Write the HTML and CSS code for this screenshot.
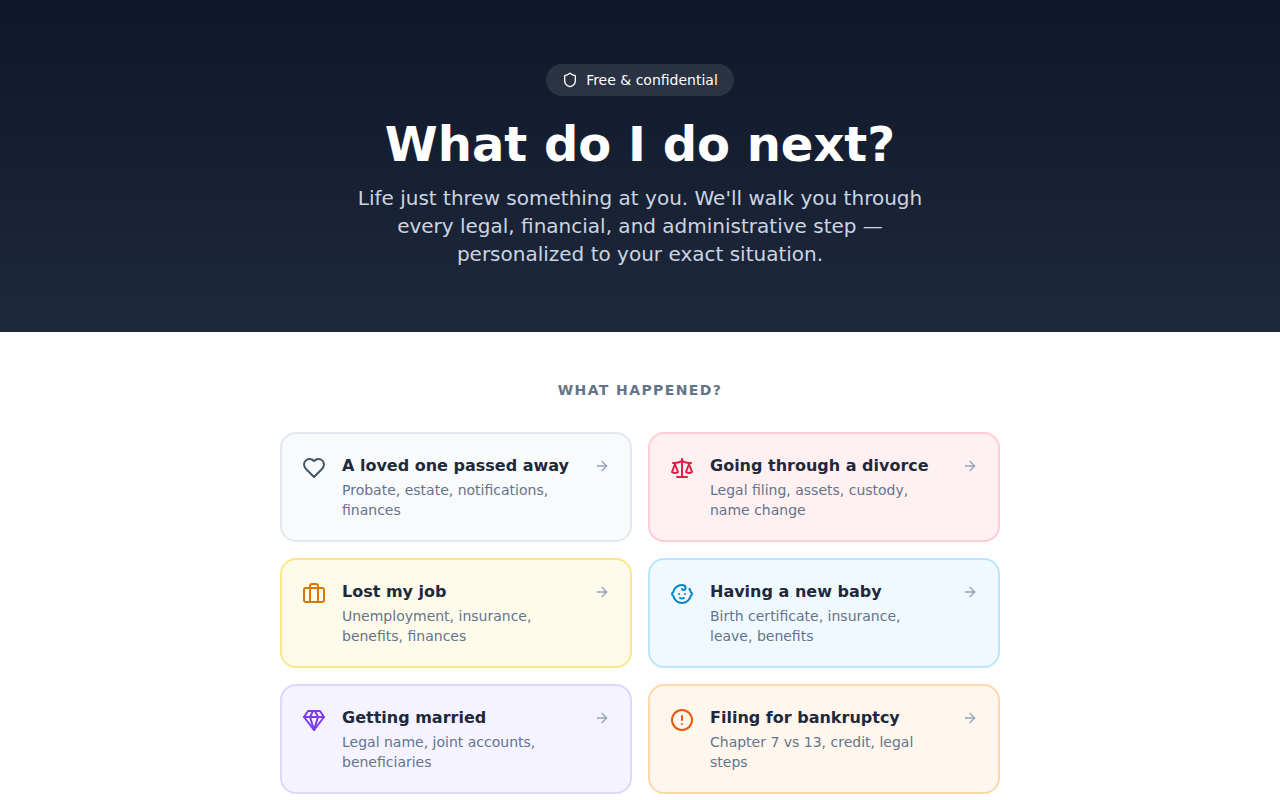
FILE: index.html
```html
<!DOCTYPE html>
<html lang="en">
<head>
  <meta charset="utf-8">
  <meta name="viewport" content="width=device-width, initial-scale=1">
  <title>What do I do next?</title>
  <link rel="stylesheet" href="styles.css">
</head>
<body>
  <header class="hero">
    <div class="badge">
      <svg class="icon icon-sm" viewBox="0 0 24 24"><path d="M20 13c0 5-3.5 7.5-7.66 8.95a1 1 0 0 1-.67-.01C7.5 20.5 4 18 4 13V6a1 1 0 0 1 1-1c2 0 4.500-1.200 6.240-2.720a1.170 1.170 0 0 1 1.520 0C14.510 3.810 17 5 19 5a1 1 0 0 1 1 1z"/></svg>
      Free &amp; confidential
    </div>
    <h1>What do I do next?</h1>
    <p>Life just threw something at you. We'll walk you through every legal, financial, and administrative step — personalized to your exact situation.</p>
  </header>

  <main class="events">
    <h2>What happened?</h2>
    <div class="grid">
      <button type="button" class="card slate">
        <svg class="icon" viewBox="0 0 24 24"><path d="M19 14c1.490-1.460 3-3.210 3-5.500A5.500 5.500 0 0 0 16.500 3c-1.760 0-3 .5-4.500 2-1.500-1.500-2.740-2-4.500-2A5.500 5.500 0 0 0 2 8.500c0 2.300 1.500 4.050 3 5.500l7 7Z"/></svg>
        <span class="card-text">
          <span class="card-title">A loved one passed away</span>
          <span class="card-desc">Probate, estate, notifications, finances</span>
        </span>
        <svg class="icon icon-sm arrow" viewBox="0 0 24 24"><path d="M5 12h14"/><path d="m12 5 7 7-7 7"/></svg>
      </button>

      <button type="button" class="card rose">
        <svg class="icon" viewBox="0 0 24 24"><path d="m16 16 3-8 3 8c-.87.65-1.920 1-3 1s-2.130-.35-3-1Z"/><path d="m2 16 3-8 3 8c-.87.65-1.920 1-3 1s-2.130-.35-3-1Z"/><path d="M7 21h10"/><path d="M12 3v18"/><path d="M3 7h2c2 0 5-1 7-2 2 1 5 2 7 2h2"/></svg>
        <span class="card-text">
          <span class="card-title">Going through a divorce</span>
          <span class="card-desc">Legal filing, assets, custody, name change</span>
        </span>
        <svg class="icon icon-sm arrow" viewBox="0 0 24 24"><path d="M5 12h14"/><path d="m12 5 7 7-7 7"/></svg>
      </button>

      <button type="button" class="card amber">
        <svg class="icon" viewBox="0 0 24 24"><path d="M16 20V4a2 2 0 0 0-2-2h-4a2 2 0 0 0-2 2v16"/><rect width="20" height="14" x="2" y="6" rx="2"/></svg>
        <span class="card-text">
          <span class="card-title">Lost my job</span>
          <span class="card-desc">Unemployment, insurance, benefits, finances</span>
        </span>
        <svg class="icon icon-sm arrow" viewBox="0 0 24 24"><path d="M5 12h14"/><path d="m12 5 7 7-7 7"/></svg>
      </button>

      <button type="button" class="card sky">
        <svg class="icon" viewBox="0 0 24 24"><path d="M10 16c.5.3 1.200.5 2 .5s1.500-.2 2-.5"/><path d="M15 12h.01"/><path d="M19.380 6.813A9 9 0 0 1 20.800 10.200a2 2 0 0 1 0 3.600 9 9 0 0 1-17.600 0 2 2 0 0 1 0-3.600A9 9 0 0 1 12 3c2 0 3.500 1.100 3.500 2.500s-.9 2.500-2 2.500c-.8 0-1.500-.4-1.500-1"/><path d="M9 12h.01"/></svg>
        <span class="card-text">
          <span class="card-title">Having a new baby</span>
          <span class="card-desc">Birth certificate, insurance, leave, benefits</span>
        </span>
        <svg class="icon icon-sm arrow" viewBox="0 0 24 24"><path d="M5 12h14"/><path d="m12 5 7 7-7 7"/></svg>
      </button>

      <button type="button" class="card violet">
        <svg class="icon" viewBox="0 0 24 24"><path d="M6 3h12l4 6-10 13L2 9Z"/><path d="M11 3 8 9l4 13 4-13-3-6"/><path d="M2 9h20"/></svg>
        <span class="card-text">
          <span class="card-title">Getting married</span>
          <span class="card-desc">Legal name, joint accounts, beneficiaries</span>
        </span>
        <svg class="icon icon-sm arrow" viewBox="0 0 24 24"><path d="M5 12h14"/><path d="m12 5 7 7-7 7"/></svg>
      </button>

      <button type="button" class="card orange">
        <svg class="icon" viewBox="0 0 24 24"><circle cx="12" cy="12" r="10"/><path d="M12 8v4"/><path d="M12 16h.01"/></svg>
        <span class="card-text">
          <span class="card-title">Filing for bankruptcy</span>
          <span class="card-desc">Chapter 7 vs 13, credit, legal steps</span>
        </span>
        <svg class="icon icon-sm arrow" viewBox="0 0 24 24"><path d="M5 12h14"/><path d="m12 5 7 7-7 7"/></svg>
      </button>
    </div>
  </main>
</body>
</html>
```

FILE: styles.css
```css
* {
  box-sizing: border-box;
}

body {
  margin: 0;
  font-family: "DejaVu Sans", sans-serif;
  color: #1e293b;
  background: #fff;
}

h1,
h2,
p {
  margin: 0;
}

.icon {
  flex: none;
  width: 24px;
  height: 24px;
  fill: none;
  stroke: currentColor;
  stroke-width: 2;
  stroke-linecap: round;
  stroke-linejoin: round;
}

.icon-sm {
  width: 16px;
  height: 16px;
}

/* Hero */
.hero {
  display: flex;
  flex-direction: column;
  align-items: center;
  padding: 64px 24px;
  text-align: center;
  color: #fff;
  background: linear-gradient(to bottom, #0f172a, #1e293b);
}

.badge {
  display: flex;
  align-items: center;
  gap: 8px;
  margin-bottom: 24px;
  padding: 6px 16px;
  border-radius: 16px;
  font-size: 14px;
  line-height: 20px;
  background: rgba(255, 255, 255, 0.1);
}

.hero h1 {
  margin-bottom: 16px;
  font-size: 48px;
  line-height: 48px;
  font-weight: 700;
}

.hero p {
  max-width: 576px;
  font-size: 20px;
  line-height: 28px;
  color: #cbd5e1;
}

/* Life events */
.events {
  max-width: 768px;
  margin: 0 auto;
  padding: 48px 24px;
}

.events h2 {
  margin-bottom: 32px;
  font-size: 14px;
  line-height: 20px;
  font-weight: 600;
  letter-spacing: 0.1em;
  text-align: center;
  text-transform: uppercase;
  color: #64748b;
}

.grid {
  display: grid;
  grid-template-columns: repeat(2, 1fr);
  gap: 16px;
}

.card {
  display: flex;
  align-items: flex-start;
  gap: 16px;
  padding: 20px;
  border: 2px solid;
  border-radius: 16px;
  font-family: inherit;
  text-align: left;
  cursor: pointer;
}

.card .icon {
  margin-top: 2px;
}

.card .arrow {
  margin-top: 4px;
  color: #94a3b8;
}

.card-text {
  display: flex;
  flex: 1;
  flex-direction: column;
  gap: 2px;
}

.card-title {
  font-size: 16px;
  line-height: 24px;
  font-weight: 600;
  color: #1e293b;
}

.card-desc {
  font-size: 14px;
  line-height: 20px;
  color: #64748b;
}

.slate {
  color: #475569;
  background: #f8fafc;
  border-color: #e2e8f0;
}

.rose {
  color: #e11d48;
  background: #fff1f2;
  border-color: #fecdd3;
}

.amber {
  color: #d97706;
  background: #fffbeb;
  border-color: #fde68a;
}

.sky {
  color: #0284c7;
  background: #f0f9ff;
  border-color: #bae6fd;
}

.violet {
  color: #7c3aed;
  background: #f5f3ff;
  border-color: #ddd6fe;
}

.orange {
  color: #ea580c;
  background: #fff7ed;
  border-color: #fed7aa;
}

@media (max-width: 640px) {
  .grid {
    grid-template-columns: 1fr;
  }
}
```
